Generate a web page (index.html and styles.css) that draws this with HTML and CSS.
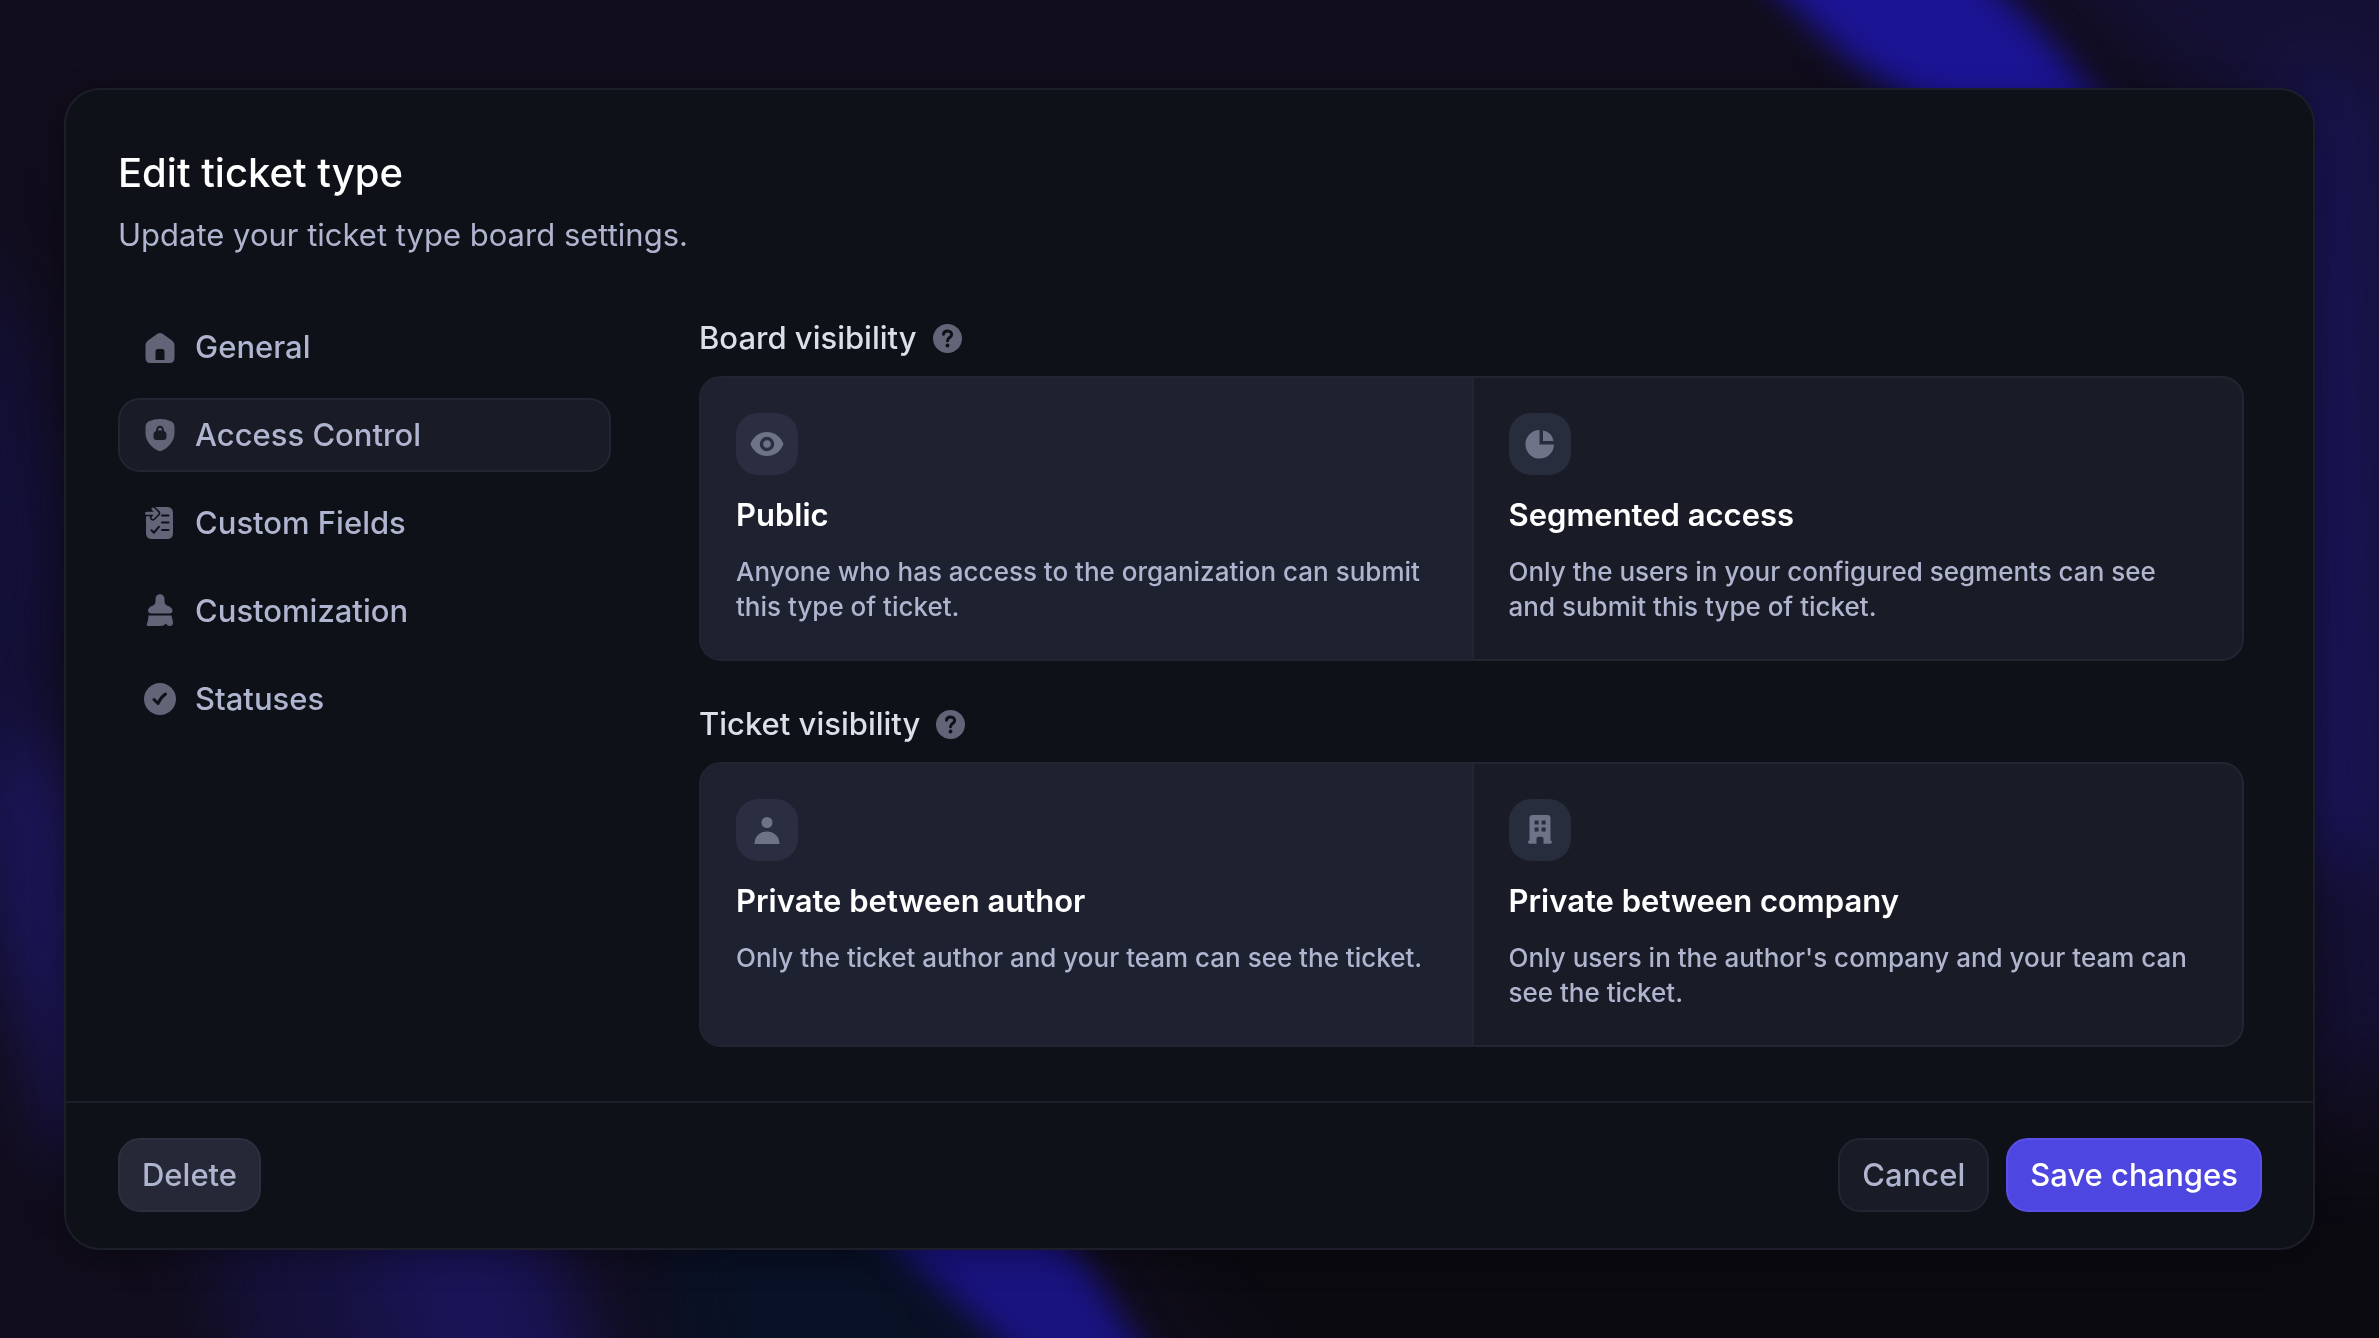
FILE: index.html
```html
<!DOCTYPE html>
<html lang="en">
<head>
<meta charset="utf-8">
<meta name="viewport" content="width=device-width, initial-scale=1">
<title>Edit ticket type</title>
<link rel="stylesheet" href="styles.css">
</head>
<body>
<svg class="backdrop" viewBox="0 0 2379 1338" preserveAspectRatio="none" aria-hidden="true">
  <defs>
    <filter id="soft" x="-50%" y="-50%" width="200%" height="200%" color-interpolation-filters="sRGB"><feGaussianBlur stdDeviation="16"/></filter>
    <filter id="wide" x="-20%" y="-20%" width="140%" height="140%" color-interpolation-filters="sRGB"><feGaussianBlur stdDeviation="40"/></filter>
  </defs>
  <rect width="2379" height="1338" fill="#110d1c"/>
  <g filter="url(#wide)">
    <path d="M1940 -120 2500 -120 2500 1000 2300 1100 2260 160Z" fill="#141034"/>
    <path d="M2290 80 2350 80 2380 860 2290 860Z" fill="#1a1660"/>
    <path d="M-90 180 20 330 70 520 30 1060 -60 900Z" fill="#13103a"/>
    <path d="M0 740 70 760 120 1160 60 1140Z" fill="#201a6c"/>
    <path d="M200 1180 540 1180 620 1430 250 1430Z" fill="#15113c"/>
    <path d="M350 1180 530 1180 620 1430 420 1430Z" fill="#191456"/>
    <path d="M640 1200 920 1200 1060 1440 690 1440Z" fill="#091126"/>
    <path d="M1080 1160 2500 1160 2500 1440 1300 1440Z" fill="#0b0a11"/>
  </g>
  <path d="M1690 -90 1915 -90 2040 30 2160 170 2020 170 1850 60Z" fill="#1b1494" filter="url(#soft)"/>
  <path d="M800 1160 1000 1160 1090 1270 1175 1400 1065 1400Z" fill="#191380" filter="url(#soft)"/>
</svg>

<main class="dialog" role="dialog" aria-labelledby="dialog-title">
  <header class="dialog-header">
    <h1 class="dialog-title" id="dialog-title">Edit ticket type</h1>
    <p class="dialog-subtitle">Update your ticket type board settings.</p>
  </header>

  <div class="dialog-body">
    <nav class="nav" aria-label="Settings sections">
      <a class="nav-item" href="#general">
        <svg class="nav-icon" viewBox="0 0 32 32" aria-hidden="true"><path fill-rule="evenodd" d="M13.4 2.7q2.6-1.6 5.2 0L28 9.6q2.500 2 2.500 5V27q0 5-5 5h-19q-5 0-5-5V14.600q0-3 2.500-5ZM14 18q-2.500 0-2.500 2.500V29h9V20.500q0-2.500-2.500-2.500Z"/></svg>
        General
      </a>
      <a class="nav-item nav-item-active" href="#access-control" aria-current="page">
        <svg class="nav-icon" viewBox="0 0 32 32" aria-hidden="true"><path fill-rule="evenodd" d="M16 0Q22 0 27 2.200 30.500 4 30.500 8V14.500C30.500 22 24 29 17.800 31.700Q16 32.400 14.200 31.700C8 29 1.500 22 1.500 14.500V8Q1.500 4 5 2.200 10 0 16 0ZM12 12Q9.500 13 9.500 15V18q0 3 3 3h7q3 0 3-3V15q0-2-2.500-3C20 5 12 5 12 12ZM14 11.500C14 7.700 18 7.700 18 11.500Z"/></svg>
        Access Control
      </a>
      <a class="nav-item" href="#custom-fields">
        <svg class="nav-icon" viewBox="0 0 32 32" aria-hidden="true"><path d="M10 0H23Q29 0 29 6V26Q29 32 23 32H8Q2 32 2 26V9H8Z"/><path class="cut" d="M18 8.500h6.500M18 15.500h6.500M18 23h6.500M7.500 23.200l2.500 2.500 5-6"/><path class="cut-wide" d="M2 6.200H13M9 2 13.200 6.200 9 10.500"/><path class="line" d="M2.500 6.200H13M9 2 13.200 6.200 9 10.500"/></svg>
        Custom Fields
      </a>
      <a class="nav-item" href="#customization">
        <svg class="nav-icon" viewBox="0 0 32 32" aria-hidden="true"><path d="M11.500 4C11.500-2.200 20.500-2.200 20.500 4V6.500Q20.500 9.500 23 10.500 28.500 12.500 28.500 15.500T25.500 18.500H7.500Q4 18.500 4 15.500T9 10.500Q11.500 9.500 11.500 6.500ZM4.500 20.500H27.500L29 27.500Q29 31 26 31 23 31 22 28.500 20 31 16 31H4Q2 31 3 28.500 4.500 25 4.500 20.500Z"/></svg>
        Customization
      </a>
      <a class="nav-item" href="#statuses">
        <svg class="nav-icon" viewBox="0 0 32 32" aria-hidden="true"><circle cx="16" cy="16" r="16"/><path class="cut-check" d="M10 16.500 14 20.500Q16.500 14.500 21.500 11"/></svg>
        Statuses
      </a>
    </nav>

    <form class="settings" id="settings-form">
      <section class="setting">
        <div class="setting-head">
          <h2 class="setting-title" id="board-title">Board visibility</h2>
          <button class="help" type="button" aria-label="About board visibility">
            <svg class="help-icon" viewBox="0 0 29 29" aria-hidden="true"><circle cx="14.500" cy="14.500" r="14.500"/><path class="help-mark" d="M10.500 10.200C11 5.800 18.800 5.900 18.600 10.700 18.500 13.600 14.500 13.600 14.500 16.800"/><circle class="help-dot" cx="14.500" cy="21.500" r="1.900"/></svg>
          </button>
        </div>
        <div class="options" role="radiogroup" aria-labelledby="board-title">
          <label class="option">
            <input class="option-input" type="radio" name="board" value="public" checked>
            <span class="tile"><svg class="tile-icon" viewBox="0 0 36 36" aria-hidden="true"><path fill-rule="evenodd" d="M1.500 18C4 11 10 6 18 6S32 11 34.500 18C32 25 26 30 18 30S4 25 1.500 18ZM18 10.800A7.200 7.200 0 1 0 18 25.200 7.200 7.200 0 1 0 18 10.800Z"/><circle cx="18" cy="18" r="3.800"/></svg></span>
            <span class="option-title">Public</span>
            <span class="option-text">Anyone who has access to the organization can submit this type of ticket.</span>
          </label>
          <label class="option">
            <input class="option-input" type="radio" name="board" value="segmented">
            <span class="tile"><svg class="tile-icon" viewBox="0 0 36 36" aria-hidden="true"><path d="M17.500 4A14.300 14.300 0 1 0 32 18.500H17.500Z"/><path d="M21 4.600A13 13 0 0 1 31.500 15H21Z"/></svg></span>
            <span class="option-title">Segmented access</span>
            <span class="option-text">Only the users in your configured segments can see and submit this type of ticket.</span>
          </label>
        </div>
      </section>

      <section class="setting">
        <div class="setting-head">
          <h2 class="setting-title" id="ticket-title">Ticket visibility</h2>
          <button class="help" type="button" aria-label="About ticket visibility">
            <svg class="help-icon" viewBox="0 0 29 29" aria-hidden="true"><circle cx="14.500" cy="14.500" r="14.500"/><path class="help-mark" d="M10.500 10.200C11 5.800 18.800 5.900 18.600 10.700 18.500 13.600 14.500 13.600 14.500 16.800"/><circle class="help-dot" cx="14.500" cy="21.500" r="1.900"/></svg>
          </button>
        </div>
        <div class="options" role="radiogroup" aria-labelledby="ticket-title">
          <label class="option">
            <input class="option-input" type="radio" name="ticket" value="author" checked>
            <span class="tile"><svg class="tile-icon" viewBox="0 0 36 36" aria-hidden="true"><circle cx="18" cy="10.500" r="5.500"/><path d="M5.500 32C5.500 15.200 30.500 15.200 30.500 32Z"/></svg></span>
            <span class="option-title">Private between author</span>
            <span class="option-text">Only the ticket author and your team can see the ticket.</span>
          </label>
          <label class="option">
            <input class="option-input" type="radio" name="ticket" value="company">
            <span class="tile"><svg class="tile-icon" viewBox="0 0 36 36" aria-hidden="true"><path fill-rule="evenodd" d="M10.500 3H25.500Q28.500 3 28.500 6V28.500Q30 28.500 30 30T28.500 31.800H21.500V26.500Q21.500 24.800 19.800 24.800H16.200Q14.500 24.800 14.500 26.500V31.800H7.500Q6 31.800 6 30T7.500 28.500V6Q7.500 3 10.500 3ZM12.600 8.500V12.500H16.600V8.500ZM19.600 8.500V12.500H23.600V8.500ZM12.600 15.500V19.500H16.600V15.500ZM19.600 15.500V19.500H23.600V15.500Z"/></svg></span>
            <span class="option-title">Private between company</span>
            <span class="option-text">Only users in the author's company and your team can see the ticket.</span>
          </label>
        </div>
      </section>
    </form>
  </div>

  <footer class="dialog-footer">
    <button class="button button-muted" type="button">Delete</button>
    <div class="footer-actions">
      <button class="button" type="button">Cancel</button>
      <button class="button button-primary" type="submit" form="settings-form">Save changes</button>
    </div>
  </footer>
</main>
</body>
</html>
```

FILE: styles.css
```css
:root {
  --surface: #0e1118;
  --raised: #191b26;
  --line: #232533;
  --icon: #626477;
  --text: #b0b5cf;
}

* {
  box-sizing: border-box;
}

body {
  margin: 0;
  min-height: 100vh;
  padding: 88px 64px;
  background: #110d1c;
  color: var(--text);
  font-family: Inter, "Liberation Sans", sans-serif;
  font-size: 31px;
  line-height: 40px;
}

h1,
h2,
p {
  margin: 0;
}

.backdrop {
  position: fixed;
  inset: 0;
  z-index: -1;
  width: 100%;
  height: 100%;
}

.dialog {
  border: 2px solid #1c1e29;
  border-radius: 36px;
  background: var(--surface);
  box-shadow: 0 8px 32px rgba(0, 0, 0, 0.3);
}

.dialog-header {
  display: flex;
  flex-direction: column;
  gap: 18px;
  padding: 59px 52px 0;
}

.dialog-title {
  color: #fff;
  font-size: 40px;
  font-weight: 500;
  line-height: 48px;
}

.dialog-body {
  display: flex;
  gap: 88px;
  padding: 55px 69px 54px 52px;
}

.nav {
  display: flex;
  flex: 0 0 493px;
  flex-direction: column;
  gap: 14px;
}

.nav-item {
  display: flex;
  align-items: center;
  gap: 19px;
  padding: 15px 24px;
  border: 2px solid transparent;
  border-radius: 22px;
  color: var(--text);
  font-weight: 500;
  text-decoration: none;
}

.nav-item-active {
  border-color: var(--line);
  background: var(--raised);
}

.nav-icon {
  flex: none;
  width: 32px;
  height: 32px;
  overflow: visible;
  fill: var(--icon);
}

.cut,
.cut-wide,
.cut-check,
.line {
  fill: none;
  stroke: var(--surface);
  stroke-width: 2;
  stroke-linecap: round;
  stroke-linejoin: round;
}

.cut-wide {
  stroke-width: 6;
}

.cut-check {
  stroke-width: 3;
}

.line {
  stroke: var(--icon);
  stroke-width: 3;
}

.settings {
  display: flex;
  flex: 1;
  flex-direction: column;
  gap: 43px;
  min-width: 0;
  padding-top: 8px;
}

.setting {
  display: flex;
  flex-direction: column;
  gap: 18px;
}

.setting-head {
  display: flex;
  align-items: center;
  gap: 16px;
}

.setting-title {
  color: #dcdfea;
  font-size: 31px;
  font-weight: 500;
  line-height: 40px;
}

.help {
  display: flex;
  padding: 0;
  border: 0;
  background: none;
}

.help-icon {
  width: 29px;
  height: 29px;
  fill: var(--icon);
}

.help-mark {
  fill: none;
  stroke: var(--surface);
  stroke-width: 3;
  stroke-linecap: round;
}

.help-dot {
  fill: var(--surface);
}

.options {
  display: grid;
  grid-template-columns: 1fr 1fr;
  overflow: hidden;
  border: 2px solid var(--line);
  border-radius: 22px;
  background: var(--raised);
}

.option {
  position: relative;
  display: flex;
  flex-direction: column;
  align-items: flex-start;
  padding: 35px;
}

.option + .option {
  border-left: 2px solid var(--line);
}

.option:has(:checked) {
  background: #1e2130;
}

.option-input {
  position: absolute;
  inset: 0;
  margin: 0;
  opacity: 0;
}

.tile {
  display: grid;
  place-items: center;
  width: 62px;
  height: 62px;
  margin-bottom: 20px;
  border-radius: 22px;
  background: #272d3c;
}

.option:has(:checked) .tile {
  background: #2a2e40;
}

.tile-icon {
  width: 36px;
  height: 36px;
  fill: #6f7388;
}

.option-title {
  margin-bottom: 19px;
  color: #fff;
  font-weight: 600;
}

.option-text {
  font-size: 26px;
  font-weight: 500;
  line-height: 35px;
}

.dialog-footer {
  display: flex;
  align-items: center;
  justify-content: space-between;
  padding: 35px 51px 36px 52px;
  border-top: 2px solid #1c1e29;
}

.footer-actions {
  display: flex;
  gap: 17px;
}

.button {
  padding: 15px 22px;
  border: 2px solid var(--line);
  border-radius: 22px;
  background: var(--raised);
  color: var(--text);
  font: inherit;
  font-weight: 500;
}

.button-muted {
  border-color: #2c2f3f;
  background: #262838;
}

.button-primary {
  border-color: #5a4fe8;
  background: #4e46e0;
  color: #fff;
}
```
